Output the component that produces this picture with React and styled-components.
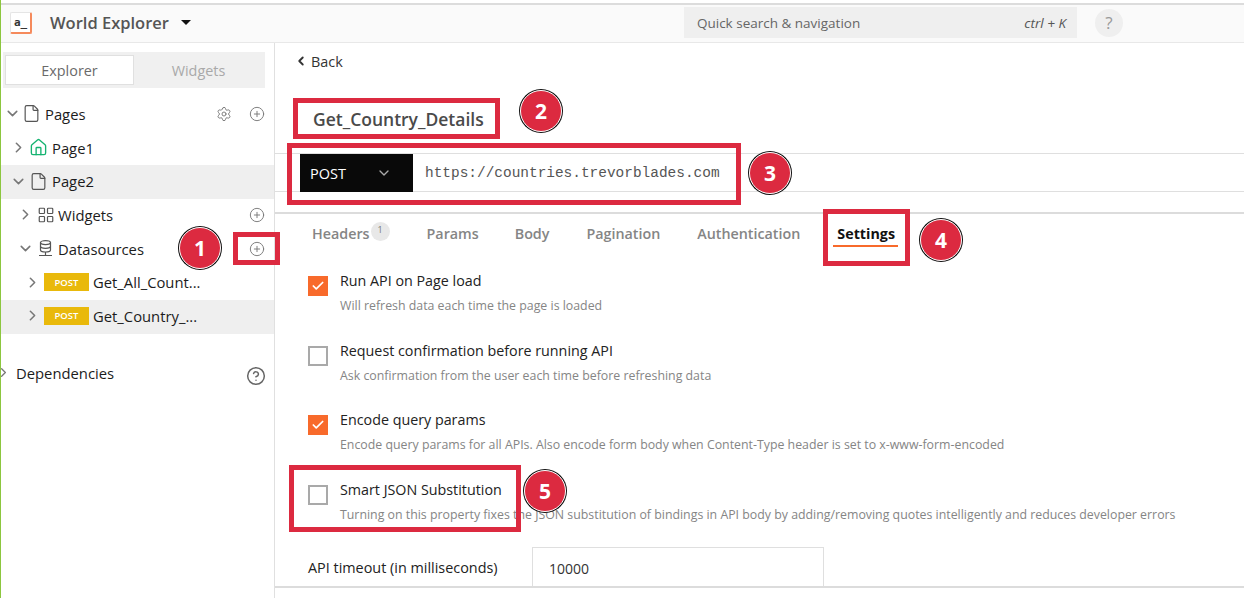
import React from 'react'
import styled, { createGlobalStyle } from 'styled-components'
import { ChevronRight, ChevronDown, ChevronLeft, File, Settings, CirclePlus, House, LayoutGrid, CircleHelp, Check } from 'lucide-react'

const Global = createGlobalStyle`
    html, body { margin: 0; padding: 0; background: #fff; }
    body { font-family: "Open Sans", "Noto Sans", sans-serif; color: #1c1c1c; }
    * { box-sizing: border-box; }
`

const Page = styled.div`
    position: relative;
    width: 1244px;
    height: 598px;
    overflow: hidden;
    padding-top: 3px;
    border-left: 1px solid #8cc63f;
    display: flex;
    flex-direction: column;
`
const TopBar = styled.header`
    height: 40px;
    flex: none;
    background: #fafafa;
    border-top: 2px solid #dcdcdc;
    border-bottom: 1px solid #e8e8e8;
    display: flex;
    align-items: center;
    padding: 0 0 2px 9px;
`
const Logo = styled.div`
    width: 22px;
    height: 22px;
    background: #fff;
    border-radius: 2px;
    border: 1px solid #e5e5e5;
    border-right: 2px solid #f58a5c;
    border-bottom: 2px solid #f58a5c;
    font-family: "DejaVu Sans Mono", monospace;
    font-size: 11px;
    font-weight: 700;
    color: #333;
    display: flex;
    align-items: center;
    justify-content: center;
`
const AppName = styled.div`
    margin-left: 18px;
    font-size: 16.5px;
    font-weight: 600;
    color: #555;
`
const Caret = styled.span`
    margin-left: 12px;
    width: 0;
    height: 0;
    border-left: 5px solid transparent;
    border-right: 5px solid transparent;
    border-top: 5px solid #111;
`
const Search = styled.div`
    margin-left: 493px;
    width: 393px;
    height: 31px;
    background: #efefef;
    padding: 0 11px 0 13px;
    display: flex;
    align-items: center;
    justify-content: space-between;
    font-size: 13.5px;
    color: #666;
`
const Shortcut = styled.i`
    font-size: 13.5px;
    color: #555;
`
const HelpDot = styled.div`
    margin-left: 18px;
    width: 28px;
    height: 28px;
    border-radius: 50%;
    background: #efefef;
    color: #999;
    font-size: 17px;
    display: flex;
    align-items: center;
    justify-content: center;
`
const Body = styled.div`
    flex: 1;
    display: flex;
    min-height: 0;
`
const Sidebar = styled.aside`
    width: 274px;
    flex: none;
    border-right: 1px solid #e0e0e0;
    padding-top: 9px;
`
const TabSwitch = styled.div`
    margin: 0 9px 0 2px;
    height: 36px;
    background: #f0f0f0;
    padding: 3px 2px;
    display: flex;
`
const SwitchTab = styled.div`
    width: 130px;
    display: flex;
    align-items: center;
    justify-content: center;
    font-size: 14.4px;
    color: ${p => (p.$active ? '#6a6a6a' : '#a9a9a9')};
    background: ${p => (p.$active ? '#fff' : 'transparent')};
    border: ${p => (p.$active ? '1px solid #e0e0e0' : 'none')};
`
const Tree = styled.div`
    margin-top: 10px;
`
const Row = styled.div`
    height: 33.7px;
    display: flex;
    align-items: center;
    padding-left: ${p => p.$indent}px;
    padding-right: 9px;
    padding-bottom: 2px;
    background: ${p => (p.$selected ? '#efefef' : 'transparent')};
    font-size: 14.8px;
    color: #1c1c1c;
    svg { flex: none; }
`
const RowIcon = styled.span`
    display: flex;
    margin-left: ${p => p.$gap || 0}px;
    color: ${p => p.$color || '#555'};
`
const RowLabel = styled.span`
    margin-left: ${p => p.$gap ?? 4}px;
    flex: 1;
    white-space: nowrap;
`
const RowAction = styled.span`
    margin-left: ${p => p.$gap || 0}px;
    display: flex;
    color: #777;
`
const Method = styled.span`
    width: 45px;
    height: 18px;
    margin-left: 3px;
    background: #e9b90b;
    color: #fff;
    font-size: 9.5px;
    font-weight: 600;
    display: flex;
    align-items: center;
    justify-content: center;
`
const Dependencies = styled(Row)`
    margin-top: 23px;
    padding-left: 0;
    padding-right: 8px;
`
const HelpRing = styled(RowAction)`
    margin-top: 6px;
`
const Main = styled.main`
    flex: 1;
    min-width: 0;
    display: flex;
    flex-direction: column;
`
const BackLink = styled.div`
    height: 34px;
    margin-top: 1px;
    padding-left: 19px;
    display: flex;
    align-items: center;
    gap: 3px;
    font-size: 14.4px;
    color: #333;
`
const ActionName = styled.h1`
    margin: 21px 0 0 38px;
    height: 54px;
    font-size: 17.5px;
    line-height: 40px;
    font-weight: 600;
    color: #4a4a4a;
`
const UrlRow = styled.div`
    height: 39px;
    border-top: 1px solid #dfdfdf;
    border-bottom: 1px solid #dfdfdf;
    display: flex;
    align-items: stretch;
    padding-left: 25px;
`
const MethodSelect = styled.div`
    width: 113px;
    background: #090909;
    color: #fff;
    font-size: 14.5px;
    display: flex;
    align-items: center;
    justify-content: space-between;
    padding: 0 21px 0 10px;
    margin-bottom: -1px;
`
const UrlText = styled.div`
    margin-left: 12px;
    font-family: "Liberation Mono", monospace;
    font-size: 14.45px;
    color: #555;
    line-height: 38px;
`
const TabBar = styled.nav`
    margin-top: 20px;
    height: 40px;
    border-top: 2px solid #dcdcdc;
    display: flex;
    align-items: center;
    padding-left: 37px;
`
const Tab = styled.div`
    position: relative;
    margin-right: ${p => p.$gap}px;
    font-size: 14.3px;
    font-weight: ${p => (p.$active ? 700 : 600)};
    color: ${p => (p.$active ? '#111' : '#858585')};
    display: flex;
    ${p => p.$active && `
        &::after {
            content: "";
            position: absolute;
            left: -4px;
            right: -3px;
            bottom: -4px;
            height: 2px;
            background: #f86a2b;
        }
    `}
`
const Count = styled.span`
    width: 19px;
    height: 19px;
    margin: -2px 0 0 1px;
    border-radius: 50%;
    background: #e8e8e8;
    color: #777;
    font-size: 9px;
    font-weight: 400;
    text-align: center;
    line-height: 16px;
`
const SettingsList = styled.section`
    flex: 1;
    padding: 15px 0 0 33px;
    min-height: 0;
    overflow: hidden;
`
const Option = styled.div`
    height: 69.5px;
    display: flex;
    gap: 12px;
`
const Box = styled.span`
    width: 20px;
    height: 20px;
    flex: none;
    margin-top: 9px;
    background: ${p => (p.$on ? '#f86a2b' : '#fff')};
    border: ${p => (p.$on ? 'none' : '2px solid #a9a9a9')};
    color: #fff;
    display: flex;
    align-items: center;
    justify-content: center;
`
const OptionText = styled.div`
    display: flex;
    flex-direction: column;
`
const OptionTitle = styled.div`
    font-size: 14.3px;
    line-height: 20px;
    margin-top: 4px;
    color: #222;
`
const OptionHint = styled.div`
    font-size: 12.35px;
    line-height: 18px;
    margin-top: 6px;
    color: #858585;
    white-space: nowrap;
`
const Timeout = styled.div`
    margin-top: 2px;
    display: flex;
    align-items: flex-start;
    gap: 34px;
`
const TimeoutLabel = styled.label`
    width: 190px;
    font-size: 14.4px;
    line-height: 20px;
    margin-top: 11px;
    color: #222;
    white-space: nowrap;
`
const TimeoutInput = styled.div`
    width: 292px;
    height: 50px;
    border: 1px solid #dfdfdf;
    padding: 11px 16px;
    font-size: 14px;
    line-height: 20px;
    color: #333;
`
const Footer = styled.div`
    height: 12px;
    flex: none;
    border-top: 2px solid #dcdcdc;
`

// red markup drawn over the screenshot
const Mark = styled.div`
    position: absolute;
    left: ${p => p.$x - 1}px;
    top: ${p => p.$y}px;
    width: ${p => p.$w}px;
    height: ${p => p.$h}px;
    border: 5px solid #dc2a40;
    pointer-events: none;
`
const Badge = styled.div`
    position: absolute;
    left: ${p => p.$x - 22}px;
    top: ${p => p.$y - 21}px;
    width: 42px;
    height: 42px;
    border-radius: 50%;
    background: #dc2a40;
    border: 1px solid #fff;
    box-shadow: 0 0 0 1px #111;
    color: #fff;
    font-size: 21px;
    font-weight: 700;
    display: flex;
    align-items: center;
    justify-content: center;
`

const options = [
    { title: 'Run API on Page load', hint: 'Will refresh data each time the page is loaded', on: true },
    { title: 'Request confirmation before running API', hint: 'Ask confirmation from the user each time before refreshing data', on: false },
    { title: 'Encode query params', hint: 'Encode query params for all APIs. Also encode form body when Content-Type header is set to x-www-form-encoded', on: true },
    { title: 'Smart JSON Substitution', hint: 'Turning on this property fixes the JSON substitution of bindings in API body by adding/removing quotes intelligently and reduces developer errors', on: false },
]
const tabs = [
    { name: 'Headers', gap: 37, count: 1 },
    { name: 'Params', gap: 36 },
    { name: 'Body', gap: 37 },
    { name: 'Pagination', gap: 37 },
    { name: 'Authentication', gap: 37 },
    { name: 'Settings', gap: 0, active: true },
]
const marks = [
    [233, 232, 47, 33],
    [293, 98, 207, 41],
    [287, 143, 454, 62],
    [823, 209, 87, 57],
    [289, 465, 232, 67],
]
const badges = [
    [200, 248, 1],
    [541, 111, 2],
    [770, 173, 3],
    [941, 240, 4],
    [545, 491, 5],
]

const Chevron = ({ open }) => {
    const Icon = open ? ChevronDown : ChevronRight
    return <Icon size={17} color="#777" strokeWidth={2.2} />
}
const Plus = () => <CirclePlus size={16} strokeWidth={1.4} />
const DatasourceIcon = () => (
    <svg width="15" height="17" viewBox="0 0 15 17" fill="none" stroke="currentColor" strokeWidth="1.2">
        <ellipse cx="7.5" cy="2.6" rx="5" ry="2" />
        <path d="M2.5 2.6v7.4c0 1.1 2.2 2 5 2s5-.9 5-2V2.6" />
        <path d="M2.5 6.3c0 1.1 2.2 2 5 2s5-.9 5-2" />
        <path d="M7.5 12v3M1 15.5h13" />
    </svg>
)

function App() {
    return (
        <Page>
            <Global />
            <TopBar>
                <Logo>a_</Logo>
                <AppName>World Explorer</AppName>
                <Caret />
                <Search>
                    <span>Quick search &amp; navigation</span>
                    <Shortcut>ctrl + K</Shortcut>
                </Search>
                <HelpDot>?</HelpDot>
            </TopBar>
            <Body>
                <Sidebar>
                    <TabSwitch>
                        <SwitchTab $active>Explorer</SwitchTab>
                        <SwitchTab>Widgets</SwitchTab>
                    </TabSwitch>
                    <Tree>
                        <Row $indent={3}>
                            <Chevron open />
                            <RowIcon $gap={1}><File size={19} strokeWidth={1.5} /></RowIcon>
                            <RowLabel>Pages</RowLabel>
                            <RowAction><Settings size={16} strokeWidth={1.4} /></RowAction>
                            <RowAction $gap={17}><Plus /></RowAction>
                        </Row>
                        <Row $indent={9}>
                            <Chevron />
                            <RowIcon $gap={2} $color="#15b371"><House size={19} strokeWidth={1.7} /></RowIcon>
                            <RowLabel>Page1</RowLabel>
                        </Row>
                        <Row $indent={9} $selected>
                            <Chevron open />
                            <RowIcon $gap={2}><File size={19} strokeWidth={1.5} /></RowIcon>
                            <RowLabel>Page2</RowLabel>
                        </Row>
                        <Row $indent={16}>
                            <Chevron />
                            <RowIcon $gap={3}><LayoutGrid size={18} strokeWidth={1.6} /></RowIcon>
                            <RowLabel $gap={3}>Widgets</RowLabel>
                            <RowAction><Plus /></RowAction>
                        </Row>
                        <Row $indent={16}>
                            <Chevron open />
                            <RowIcon $gap={4}><DatasourceIcon /></RowIcon>
                            <RowLabel $gap={5}>Datasources</RowLabel>
                            <RowAction><Plus /></RowAction>
                        </Row>
                        <Row $indent={23}>
                            <Chevron />
                            <Method>POST</Method>
                            <RowLabel>Get_All_Count...</RowLabel>
                        </Row>
                        <Row $indent={23} $selected>
                            <Chevron />
                            <Method>POST</Method>
                            <RowLabel>Get_Country_...</RowLabel>
                        </Row>
                        <Dependencies>
                            <ChevronRight size={15} color="#777" strokeWidth={2} style={{ marginLeft: -5 }} />
                            <RowLabel $gap={5}>Dependencies</RowLabel>
                            <HelpRing><CircleHelp size={20} strokeWidth={1.8} color="#666" /></HelpRing>
                        </Dependencies>
                    </Tree>
                </Sidebar>
                <Main>
                    <BackLink>
                        <ChevronLeft size={14} strokeWidth={3.2} color="#333" />
                        Back
                    </BackLink>
                    <ActionName>Get_Country_Details</ActionName>
                    <UrlRow>
                        <MethodSelect>
                            POST
                            <ChevronDown size={16} color="#aaa" strokeWidth={2} />
                        </MethodSelect>
                        <UrlText>https://countries.trevorblades.com</UrlText>
                    </UrlRow>
                    <TabBar>
                        {tabs.map(t => (
                            <Tab key={t.name} $gap={t.gap} $active={t.active}>
                                {t.name}
                                {t.count && <Count>{t.count}</Count>}
                            </Tab>
                        ))}
                    </TabBar>
                    <SettingsList>
                        {options.map(o => (
                            <Option key={o.title}>
                                <Box $on={o.on}>{o.on && <Check size={14} strokeWidth={3} />}</Box>
                                <OptionText>
                                    <OptionTitle>{o.title}</OptionTitle>
                                    <OptionHint>{o.hint}</OptionHint>
                                </OptionText>
                            </Option>
                        ))}
                        <Timeout>
                            <TimeoutLabel>API timeout (in milliseconds)</TimeoutLabel>
                            <TimeoutInput>10000</TimeoutInput>
                        </Timeout>
                    </SettingsList>
                    <Footer />
                </Main>
            </Body>
            {marks.map(([x, y, w, h]) => (
                <Mark key={x} $x={x} $y={y} $w={w} $h={h} />
            ))}
            {badges.map(([x, y, n]) => (
                <Badge key={n} $x={x} $y={y}>{n}</Badge>
            ))}
        </Page>
    )
}

export default App
